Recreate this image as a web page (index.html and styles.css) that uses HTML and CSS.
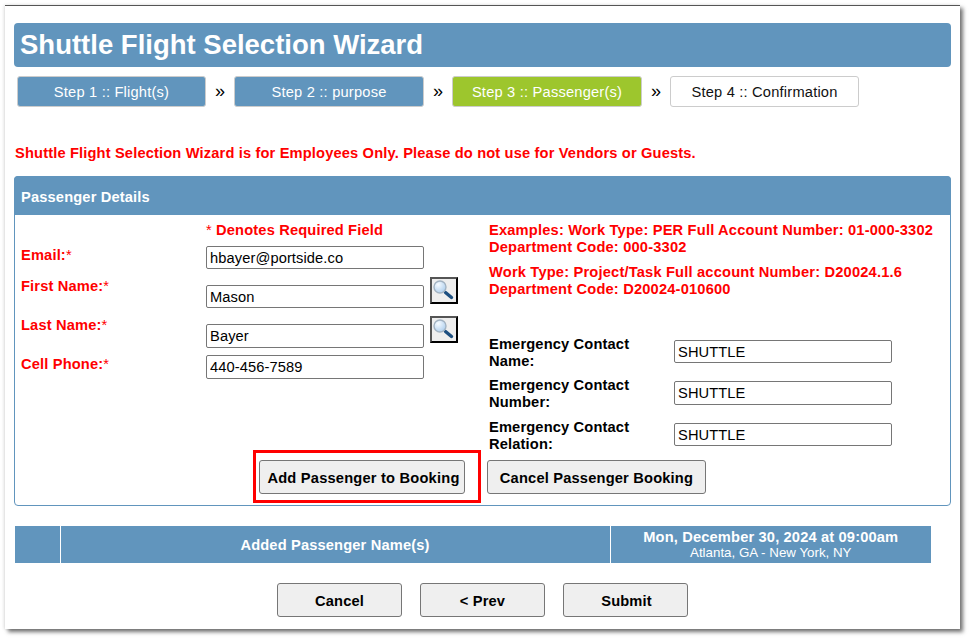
FILE: index.html
```html
<!DOCTYPE html>
<html lang="en">
<head>
<meta charset="utf-8">
<title>Shuttle Flight Selection Wizard</title>
<link rel="stylesheet" href="styles.css">
</head>
<body>
<div class="window">
  <h1 class="title">Shuttle Flight Selection Wizard</h1>
  <nav class="steps">
    <span class="step done">Step 1 :: Flight(s)</span>
    <span class="sep">»</span>
    <span class="step done">Step 2 :: purpose</span>
    <span class="sep">»</span>
    <span class="step current">Step 3 :: Passenger(s)</span>
    <span class="sep">»</span>
    <span class="step">Step 4 :: Confirmation</span>
  </nav>
  <p class="warning">Shuttle Flight Selection Wizard is for Employees Only. Please do not use for Vendors or Guests.</p>
  <section class="panel">
    <h2 class="panel-head">Passenger Details</h2>
    <div class="panel-body">
      <div class="col-left">
        <div class="required"><span class="star">*</span> Denotes Required Field</div>
        <div class="row row-email">
          <label class="lbl">Email:<span class="star">*</span></label>
          <input class="field" value="hbayer@portside.co">
        </div>
        <div class="row row-first">
          <label class="lbl">First Name:<span class="star">*</span></label>
          <input class="field" value="Mason">
          <button class="lookup" type="button"><svg width="24" height="22" viewBox="0 0 24 22"><defs><radialGradient id="lens" cx="35%" cy="30%" r="80%"><stop offset="0" stop-color="#f6fbff"/><stop offset="1" stop-color="#a9cbec"/></radialGradient></defs><path d="M13.5 12.5l6 5" stroke="#1d4f80" stroke-width="3.4" stroke-linecap="round"/><circle cx="8" cy="7" r="6" fill="url(#lens)" stroke="#a3b3c2" stroke-width="1.4"/></svg></button>
        </div>
        <div class="row row-last">
          <label class="lbl">Last Name:<span class="star">*</span></label>
          <input class="field" value="Bayer">
          <button class="lookup" type="button"><svg width="24" height="22" viewBox="0 0 24 22"><path d="M13.5 12.5l6 5" stroke="#1d4f80" stroke-width="3.4" stroke-linecap="round"/><circle cx="8" cy="7" r="6" fill="url(#lens)" stroke="#a3b3c2" stroke-width="1.4"/></svg></button>
        </div>
        <div class="row row-cell">
          <label class="lbl">Cell Phone:<span class="star">*</span></label>
          <input class="field" value="440-456-7589">
        </div>
      </div>
      <div class="col-right">
        <p class="note">Examples: Work Type: PER Full Account Number: 01-000-3302<br>Department Code: 000-3302</p>
        <p class="note note-2">Work Type: Project/Task Full account Number: D20024.1.6<br>Department Code: D20024-010600</p>
        <div class="contact contact-1">
          <label class="clbl">Emergency Contact Name:</label>
          <input class="field" value="SHUTTLE">
        </div>
        <div class="contact contact-2">
          <label class="clbl">Emergency Contact Number:</label>
          <input class="field" value="SHUTTLE">
        </div>
        <div class="contact contact-3">
          <label class="clbl">Emergency Contact Relation:</label>
          <input class="field" value="SHUTTLE">
        </div>
      </div>
      <div class="actions">
        <button class="btn btn-add" type="button">Add Passenger to Booking</button>
        <button class="btn btn-cancel-p" type="button">Cancel Passenger Booking</button>
        <span class="highlight"></span>
      </div>
    </div>
  </section>
  <table class="names">
    <tr>
      <th class="c1"></th>
      <th class="c2">Added Passenger Name(s)</th>
      <th class="c3">Mon, December 30, 2024 at 09:00am<span class="route">Atlanta, GA - New York, NY</span></th>
    </tr>
  </table>
  <div class="footer">
    <button class="btn btn-foot" type="button">Cancel</button>
    <button class="btn btn-foot" type="button">&lt; Prev</button>
    <button class="btn btn-foot btn-submit" type="button">Submit</button>
  </div>
</div>
</body>
</html>
```

FILE: styles.css
```css
* { box-sizing: border-box; }
html, body { margin: 0; padding: 0; background: #fff; }
body { font-family: "Liberation Sans", Arial, sans-serif; height: 638px; overflow: hidden; }
.window {
  margin: 5px 0 0 5px;
  width: 955px;
  height: 624px;
  background: #fff;
  padding: 17px 9px 0;
  border-top: 1px solid #555;
  box-shadow: 3px 3px 4px rgba(0,0,0,.55), -1px 0 3px rgba(0,0,0,.12);
  position: relative;
}
.title {
  margin: 0;
  height: 44px;
  background: #6195bd;
  border-radius: 4px;
  color: #fff;
  font-size: 27.5px;
  line-height: 44px;
  font-weight: bold;
  padding-left: 6px;
}
.steps { display: flex; align-items: center; margin: 9px 0 0 3px; height: 31px; }
.step {
  width: 189px;
  height: 31px;
  border: 1px solid #ccc;
  border-radius: 3px;
  text-align: center;
  font-size: 14.67px;
  letter-spacing: .2px;
  line-height: 30px;
  color: #111;
  background: #fff;
}
.step.done { background: #6195bd; color: #fff; }
.step.current { background: #9dc62d; color: #fff; }
.sep { width: 28px; text-align: center; font-size: 18px; line-height: 31px; color: #000; }
.steps .step:nth-child(3), .steps .step:nth-child(5) { width: 190px; }
.warning {
  margin: 38px 0 0 1px;
  height: 16px;
  color: #f00;
  font-size: 14.67px;
  line-height: 16px;
  font-weight: bold;
  letter-spacing: .15px;
}
.panel {
  margin-top: 15px;
  height: 330px;
  border: 1px solid #6195bd;
  border-radius: 4px;
  position: relative;
}
.panel-head {
  margin: -1px -1px 0;
  height: 39px;
  background: #6195bd;
  border-radius: 4px 4px 0 0;
  color: #fff;
  font-size: 14.67px;
  line-height: 42px;
  font-weight: bold;
  padding-left: 7px;
  letter-spacing: .15px;
}
.panel-body { display: grid; grid-template-columns: 468px 1fr; grid-template-rows: 245px auto; padding-left: 6px; }
.col-left, .col-right { font-weight: bold; font-size: 14.67px; letter-spacing: .15px; }
.required { margin: 7px 0 0 185px; height: 16px; line-height: 16px; color: #f00; }
.star { font-weight: normal; }
.row { display: flex; color: #f00; }
.lbl { width: 185px; line-height: 16px; padding-top: 1px; }
.field {
  width: 218px;
  height: 23px;
  border: 1px solid #767676;
  border-radius: 2px;
  padding: 1px 3px;
  font: 14.67px "Liberation Sans", Arial, sans-serif;
  letter-spacing: .1px;
  color: #000;
  background: #fff;
}
.row-email { margin-top: 8px; height: 23px; }
.row-first { margin-top: 8px; height: 31px; }
.row-first .field, .row-last .field { margin-top: 8px; }
.row-last { margin-top: 8px; height: 32px; }
.row-last .field { height: 24px; }
.row-cell { margin-top: 7px; }
.row-cell .field { height: 24px; }
.lookup {
  margin-left: 6px;
  width: 28px;
  height: 27px;
  padding: 0;
  background: #eee;
  border: 2px solid;
  border-color: #555 #000 #000 #555;
  display: block;
}
.lookup svg { display: block; }
.note { margin: 7px 0 0; color: #f00; line-height: 17px; letter-spacing: .18px; }
.note-2 { margin-top: 8px; }
.contact { display: flex; line-height: 17px; color: #000; }
.clbl { width: 185px; padding-right: 30px; }
.contact-1 { margin-top: 37px; height: 34px; }
.contact-1 .clbl { padding-top: 1px; }
.contact-1 .field { margin-top: 5px; }
.contact-2 { margin-top: 8px; height: 35px; }
.contact-2 .field { height: 24px; margin-top: 4px; }
.contact-3 { margin-top: 7px; height: 34px; }
.contact-3 .field { margin-top: 4px; }
.btn {
  height: 34px;
  background: #efefef;
  border: 1px solid #767676;
  border-radius: 3px;
  color: #000;
  font: bold 14.67px "Liberation Sans", Arial, sans-serif;
  letter-spacing: .15px;
  padding: 1px 0 0;
}
.actions { grid-column: 1 / 3; display: flex; gap: 22px; margin-left: 238px; position: relative; height: 34px; }
.btn-add { width: 206px; padding-left: 3px; letter-spacing: .2px; }
.btn-cancel-p { width: 219px; letter-spacing: .18px; }
.highlight {
  position: absolute;
  left: -6px;
  top: -10px;
  width: 228px;
  height: 53px;
  border: 3px solid #f00;
  pointer-events: none;
}
.names {
  margin: 20px 0 0 1px;
  width: 916px;
  height: 37px;
  border-collapse: collapse;
  table-layout: fixed;
  background: #6195bd;
  color: #fff;
}
.names th { padding: 0; text-align: center; font-size: 14.67px; letter-spacing: .15px; font-weight: bold; line-height: 16px; }
.c1 { width: 45px; border-right: 1px solid #fff; }
.c2 { width: 550px; border-right: 1px solid #fff; }
.route { display: block; font-weight: normal; font-size: 13.33px; letter-spacing: 0; line-height: 16px; }
.footer { display: flex; justify-content: flex-start; gap: 18px; margin: 20px 0 0 263px; }
.btn-foot { width: 125px; }
.btn-submit { padding-left: 2px; }
```
